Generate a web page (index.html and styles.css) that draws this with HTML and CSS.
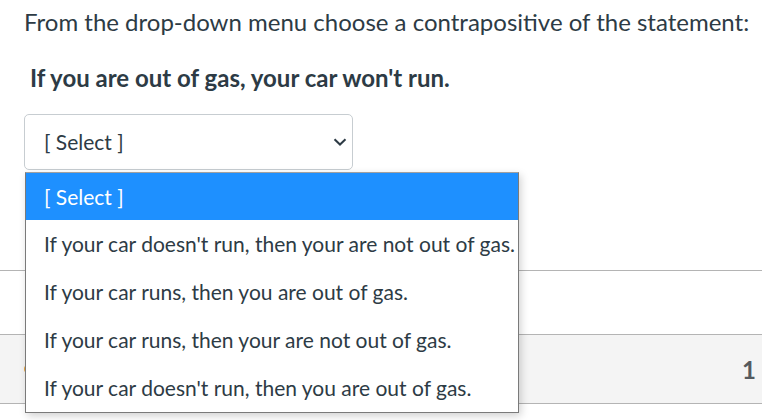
FILE: index.html
```html
<!DOCTYPE html>
<html lang="en">
<head>
<meta charset="utf-8">
<title>Contrapositive question</title>
<link rel="stylesheet" href="styles.css">
</head>
<body>
<div class="page">
  <div class="question">
    <p class="prompt">From the drop-down menu choose a contrapositive of the statement:</p>
    <p class="statement"><strong>If you are out of gas, your car won't run.</strong></p>
    <div class="select-wrap">
      <div class="select">
        <span class="select-label">[ Select ]</span>
        <svg class="chevron" width="14" height="8" viewBox="0 0 14 8"><path d="M1.5 1.2 L7 6.5 L12.5 1.2" fill="none" stroke="#2d3b45" stroke-width="2"/></svg>
      </div>
      <ul class="listbox">
        <li class="option selected">[ Select ]</li>
        <li class="option">If your car doesn't run, then your are not out of gas.</li>
        <li class="option">If your car runs, then you are out of gas.</li>
        <li class="option">If your car runs, then your are not out of gas.</li>
        <li class="option">If your car doesn't run, then you are out of gas.</li>
      </ul>
    </div>
  </div>
  <div class="divider"></div>
  <div class="spacer"></div>
  <div class="footer">
    <span class="marker"></span>
    <span class="page-num">1</span>
  </div>
</div>
</body>
</html>
```

FILE: styles.css
```css
html, body {
  margin: 0;
  padding: 0;
  background: #ffffff;
}
body {
  font-family: Lato, "Liberation Sans", sans-serif;
  color: #2d3b45;
  width: 762px;
  height: 420px;
  overflow: hidden;
}
.page {
  display: flex;
  flex-direction: column;
}
.question {
  padding: 8px 0 0 24px;
}
.prompt {
  margin: 0;
  font-size: 24px;
  line-height: 28px;
}
.statement {
  margin: 28px 0 0 6px;
  font-size: 24px;
  line-height: 28px;
}
.statement strong {
  font-weight: 700;
}
.select-wrap {
  position: relative;
  margin-top: 22px;
  width: 329px;
}
.select {
  box-sizing: border-box;
  height: 56px;
  border: 1px solid #c7cdd1;
  border-radius: 5px;
  display: flex;
  align-items: center;
  justify-content: space-between;
  padding: 0 5px 1px 19px;
  background: #fff;
}
.select-label {
  font-size: 21px;
}
.chevron {
  display: block;
}
.listbox {
  position: absolute;
  z-index: 2;
  top: 58px;
  left: 1px;
  width: 494px;
  box-sizing: border-box;
  margin: 0;
  padding: 0;
  list-style: none;
  background: #fff;
  border: 1px solid #7a7a7a;
  border-top-color: #a0a0a0;
  box-shadow: 2px 3px 8px rgba(0, 0, 0, 0.18);
}
.option {
  height: 48px;
  display: flex;
  align-items: center;
  padding: 0 0 1px 18px;
  box-sizing: border-box;
  font-size: 21px;
  white-space: nowrap;
}
.option.selected {
  background: #1e90ff;
  color: #ffffff;
  height: 47px;
}
.divider {
  margin-top: 100px;
  height: 1px;
  background: #b4b4b4;
}
.spacer {
  height: 63px;
}
.footer {
  box-sizing: border-box;
  height: 70px;
  border-top: 1px solid #b4b4b4;
  border-bottom: 1px solid #b4b4b4;
  background: #f4f4f4;
  display: flex;
  align-items: center;
  justify-content: space-between;
  padding: 0 6px 0 24px;
}
.marker {
  width: 8px;
  height: 8px;
  border-radius: 50%;
  background: #e8a33b;
}
.page-num {
  font-size: 24px;
  font-weight: 700;
  color: #555a5e;
}
```
